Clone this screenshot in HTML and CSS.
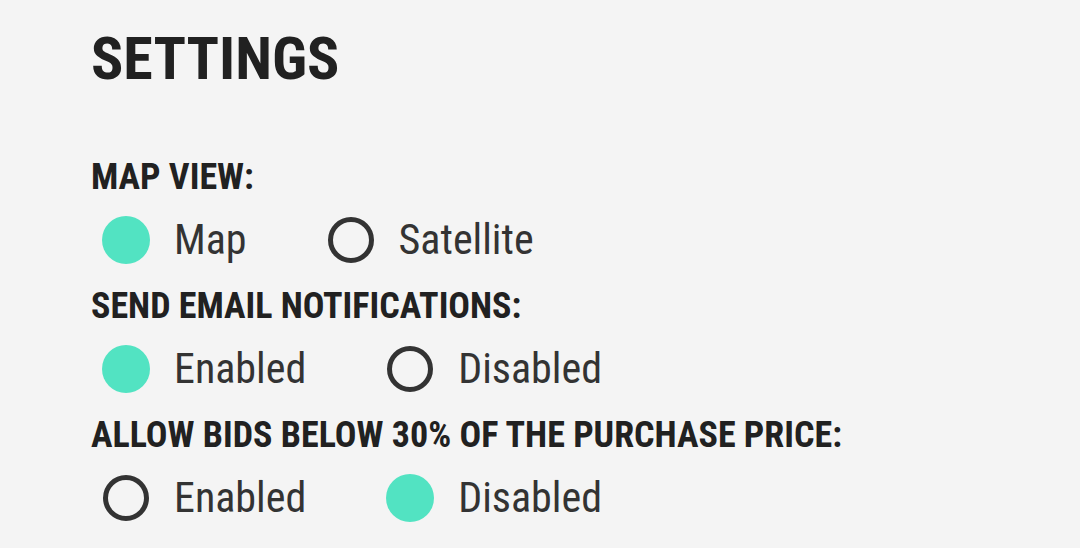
FILE: index.html
```html
<!DOCTYPE html>
<html lang="en">
<head>
    <meta charset="UTF-8">
    <meta name="viewport" content="width=device-width, initial-scale=1.0">
    <title>Settings</title>
    <link rel="stylesheet" href="styles.css">
</head>
<body>
    <div class="container">
        <h1>SETTINGS</h1>

        <div class="setting">
            <div class="setting-label">MAP VIEW:</div>
            <div class="options">
                <label class="option"><span class="radio checked"></span><span class="option-text">Map</span></label>
                <label class="option"><span class="radio"></span><span class="option-text">Satellite</span></label>
            </div>
        </div>

        <div class="setting">
            <div class="setting-label">SEND EMAIL NOTIFICATIONS:</div>
            <div class="options">
                <label class="option"><span class="radio checked"></span><span class="option-text">Enabled</span></label>
                <label class="option"><span class="radio"></span><span class="option-text">Disabled</span></label>
            </div>
        </div>

        <div class="setting">
            <div class="setting-label">ALLOW BIDS BELOW 30% OF THE PURCHASE PRICE:</div>
            <div class="options">
                <label class="option"><span class="radio"></span><span class="option-text">Enabled</span></label>
                <label class="option"><span class="radio checked"></span><span class="option-text">Disabled</span></label>
            </div>
        </div>
    </div>
</body>
</html>
```

FILE: styles.css
```css
body {
    font-family: "Roboto Condensed", Roboto, sans-serif;
    font-stretch: condensed;
    background-color: #f4f4f4;
    color: #212121;
    margin: 0;
    padding: 24px 0 0 91px;
}

h1 {
    font-size: 60px;
    line-height: 70px;
    font-weight: 700;
    margin: 0 0 63px 0;
    color: #212121;
}

.setting {
    margin-bottom: 16px;
}

.setting-label {
    font-size: 36px;
    line-height: 40px;
    font-weight: 700;
    margin-bottom: 13px;
}

.options {
    display: flex;
    align-items: center;
    height: 60px;
    gap: 80px;
    padding-left: 11px;
}

.option {
    display: flex;
    align-items: center;
    gap: 24px;
}

.radio {
    box-sizing: border-box;
    width: 46px;
    height: 46px;
    margin: 1px;
    border: 5px solid #333;
    border-radius: 50%;
}

.radio.checked {
    width: 48px;
    height: 48px;
    margin: 0;
    border: none;
    background-color: #52e3c2;
}

.option-text {
    font-size: 42px;
    line-height: 48px;
    color: #333;
}
```
